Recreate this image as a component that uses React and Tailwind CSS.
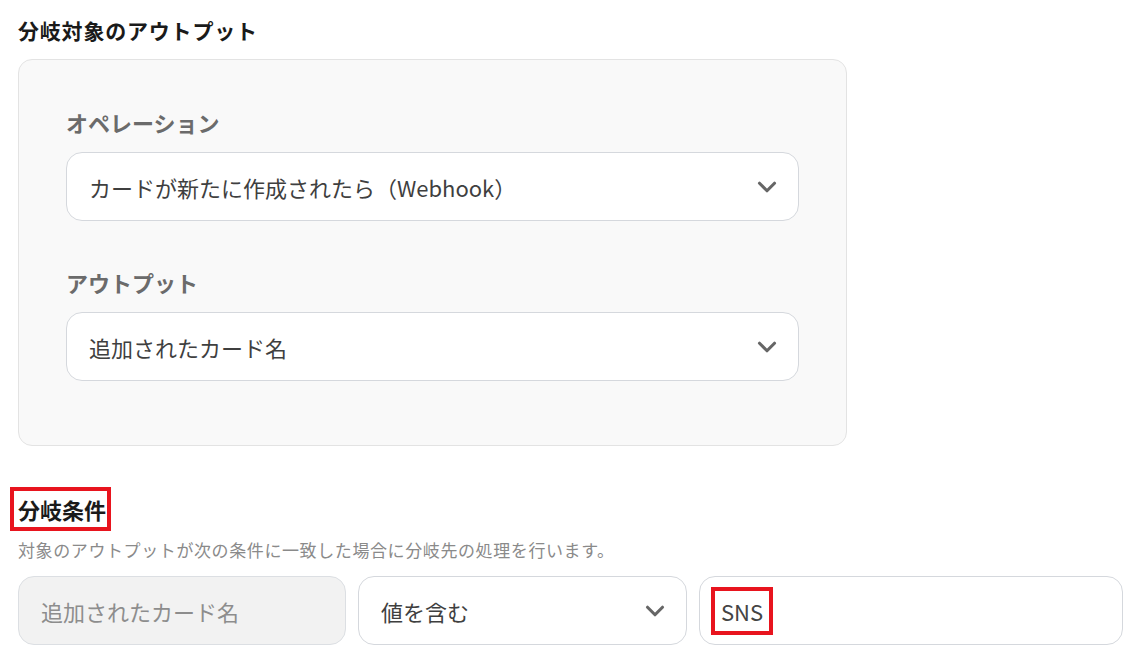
import React from 'react';
import { ChevronDown } from 'lucide-react';

const font = { fontFamily: '"Noto Sans CJK JP", "Noto Sans", sans-serif' };

const SelectBox = ({ value, className = '' }) => (
  <div className={`flex items-center justify-between h-[69px] rounded-[16px] border border-[#d5d8dd] bg-white pl-[22px] pr-[16px] ${className}`}>
    <span className="text-[22px] leading-[30px] text-[#3f3f3f]">{value}</span>
    <ChevronDown size={30} strokeWidth={2.5} className="text-[#666666] shrink-0" />
  </div>
);

const Field = ({ label, value }) => (
  <div className="flex flex-col">
    <div className="text-[22px] leading-[26px] font-bold text-[#6b6b6b]">{label}</div>
    <SelectBox value={value} className="mt-[17px]" />
  </div>
);

export default function App() {
  return (
    <div className="min-h-[672px] bg-white px-[18px] pt-[16px]" style={font}>
      <h2 className="text-[21px] leading-[28px] font-bold text-[#1a1a1a] tracking-[0.8px]">分岐対象のアウトプット</h2>

      {/* 対象アウトプットのカード */}
      <div className="mt-[15px] w-[829px] rounded-[14px] border border-[#e3e3e3] bg-[#f9f9f9] px-[47px] pt-[49px] pb-[64px] flex flex-col gap-[48px]">
        <Field label="オペレーション" value="カードが新たに作成されたら（Webhook）" />
        <Field label="アウトプット" value="追加されたカード名" />
      </div>

      {/* 分岐条件 */}
      <div className="mt-[41px] -ml-[8px]">
        <span className="inline-block border-4 border-[#e8141e] pl-[4px] pr-[1px] text-[22px] leading-[36px] font-bold text-[#1a1a1a]">分岐条件</span>
      </div>
      <p className="mt-[7px] text-[17px] leading-[24px] tracking-[0.6px] text-[#8a8a8a]">対象のアウトプットが次の条件に一致した場合に分岐先の処理を行います。</p>

      <div className="mt-[14px] flex gap-[12px]">
        <div className="flex items-center w-[328px] h-[69px] rounded-[16px] border border-[#dcdfe3] bg-[#f2f2f2] pl-[22px]">
          <span className="text-[22px] leading-[30px] text-[#8d8d8d]">追加されたカード名</span>
        </div>
        <SelectBox value="値を含む" className="w-[329px]" />
        <div className="flex items-center w-[424px] h-[69px] rounded-[16px] border border-[#d5d8dd] bg-white pl-[11px]">
          <span className="inline-block border-4 border-[#e8141e] h-[48px] w-[62px] pl-[6px] text-[22px] leading-[40px] text-[#444444]">SNS</span>
        </div>
      </div>
    </div>
  );
}
